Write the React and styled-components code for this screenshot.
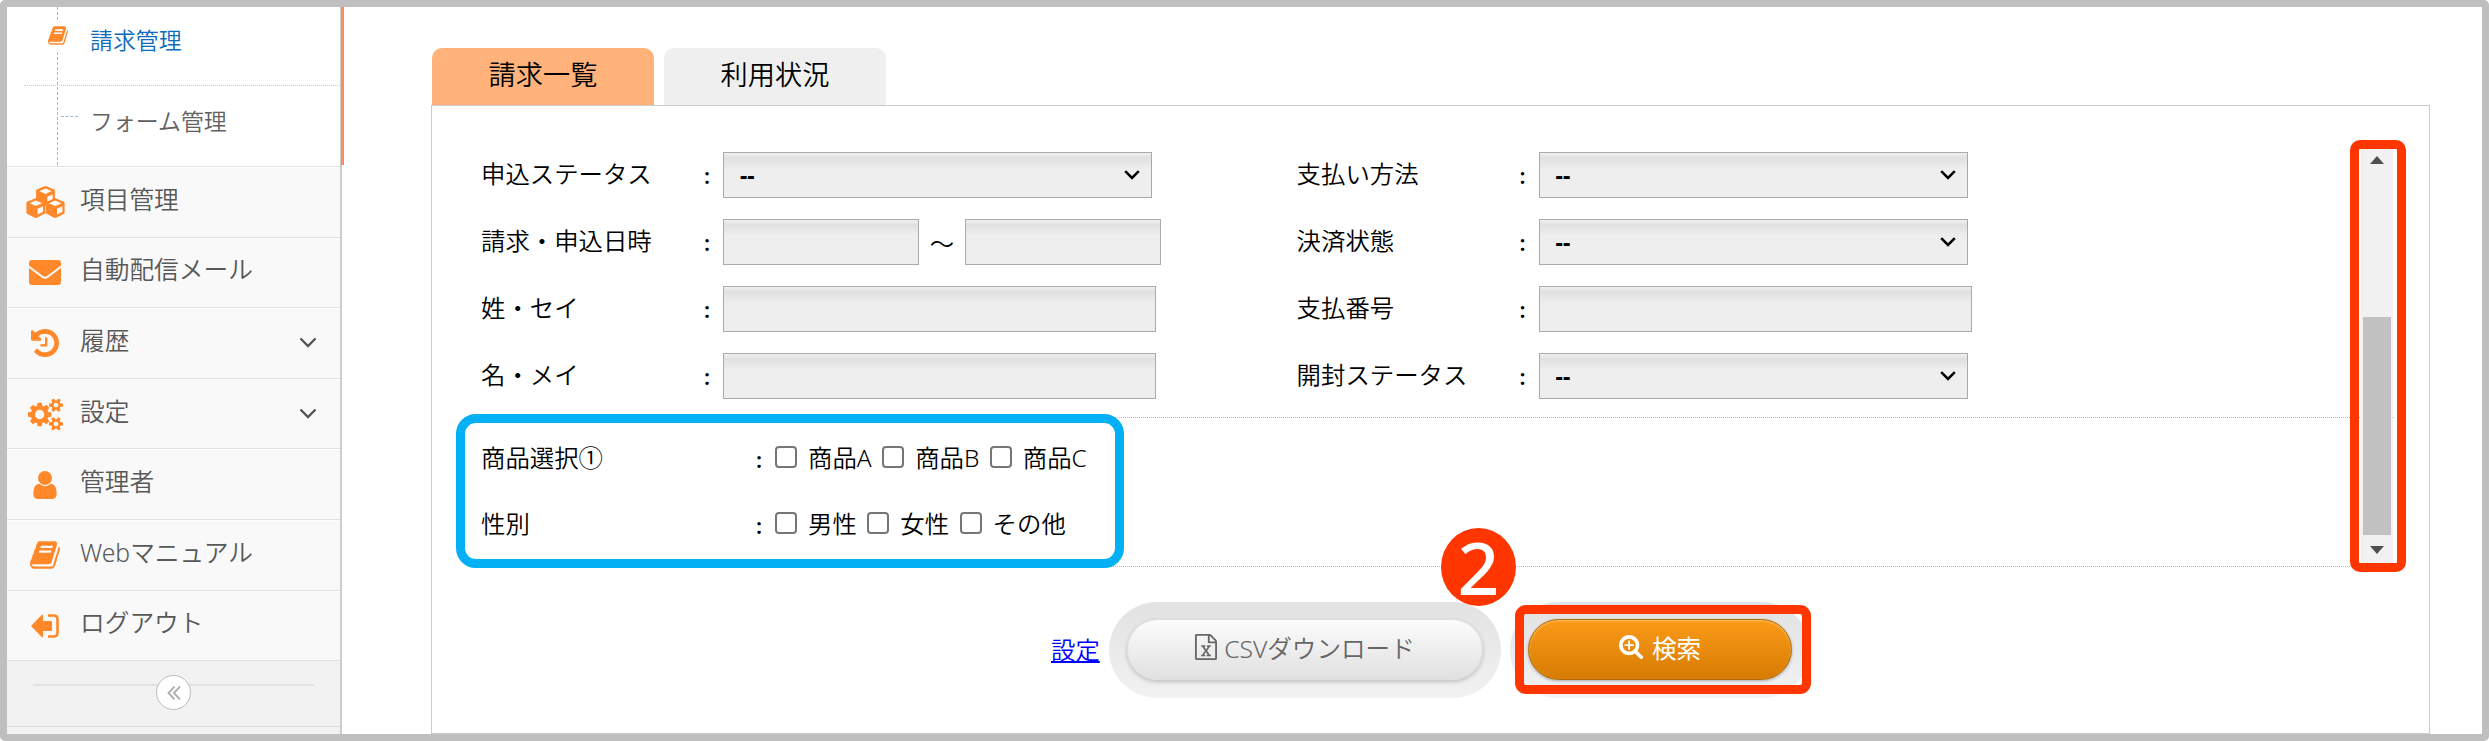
import styled, { createGlobalStyle } from "styled-components";

const menus = [
  { label: "項目管理", icon: "cubes" },
  { label: "自動配信メール", icon: "mail" },
  { label: "履歴", icon: "history", open: true },
  { label: "設定", icon: "cogs", open: true },
  { label: "管理者", icon: "user" },
  { label: "Webマニュアル", icon: "book" },
  { label: "ログアウト", icon: "logout" },
];

const BOOK =
  "M1703 478q40 57 18 129l-275 906q-19 64-76.5 107.5t-122.5 43.5h-923q-77 0-148.5-53.5t-99.5-131.5q-24-67-2-127 0-4 3-27t4-37q1-8-3-21.5t-3-19.5q2-11 8-21t16.5-23.5 16.5-23.5q23-38 45-91.5t30-91.5q3-10 .5-30t-.5-28q3-11 17-28t17-23q21-36 42-92t25-90q1-9-2.5-32t.5-28q4-13 22-30.5t22-22.5q19-26 42.5-84.5t27.5-96.5q1-8-3-25.5t-2-26.5q2-8 9-18t18-23 17-21q8-12 16.5-30.5t15-35 16-36 19.5-32 26.5-23.5 36-11.5 47.5 5.5l-1 3q38-9 51-9h761q74 0 114 56t18 130l-274 906q-36 119-71.5 153.5t-128.5 34.5h-869q-27 0-38 15-11 16-1 43 24 70 144 70h923q29 0 56-15.5t35-41.5l300-987q7-22 5-57 38 15 59 43zm-1064 2q-4 13 2 22.5t20 9.5h608q13 0 25.5-9.5t16.5-22.5l21-64q4-13-2-22.5t-20-9.5h-608q-13 0-25.5 9.5t-16.5 22.5zm-83 256q-4 13 2 22.5t20 9.5h608q13 0 25.5-9.5t16.5-22.5l21-64q4-13-2-22.5t-20-9.5h-608q-13 0-25.5 9.5t-16.5 22.5z";
const USER =
  "M1536 1399q0 109-62.5 187t-150.5 78h-854q-88 0-150.5-78t-62.5-187q0-85 8.5-160.5t31.5-152 58.5-131 94-89 134.5-34.5q131 128 313 128t313-128q76 0 134.5 34.5t94 89 58.5 131 31.5 152 8.5 160.5zm-256-887q0 159-112.5 271.5t-271.5 112.5-271.5-112.5-112.5-271.5 112.5-271.5 271.5-112.5 271.5 112.5 112.5 271.5z";
const HISTORY =
  "M1664 896q0 156-61 298t-164 245-245 164-298 61q-172 0-327-72.5t-264-204.5q-7-10-6.5-22.5t8.5-20.5l137-138q10-9 25-9 16 2 23 12 73 95 179 147t225 52q104 0 198.5-40.5t163.5-109.5 109.5-163.5 40.5-198.5-40.5-198.5-109.5-163.5-163.5-109.5-198.5-40.5q-98 0-188 35.5t-160 101.5l137 138q31 30 14 69-17 40-59 40h-448q-26 0-45-19t-19-45v-448q0-42 40-59 39-17 69 14l130 129q107-101 244.5-156.5t284.5-55.5q156 0 298 61t245 164 164 245 61 298zm-640-288v448q0 14-9 23t-23 9h-320q-14 0-23-9t-9-23v-64q0-14 9-23t23-9h224v-352q0-14 9-23t23-9h64q14 0 23 9t9 23z";
const COGS =
  "M896 896q0-106-75-181t-181-75-181 75-75 181 75 181 181 75 181-75 75-181zm768 512q0-52-38-90t-90-38-90 38-38 90q0 53 37.5 90.5t90.5 37.5 90.5-37.5 37.5-90.5zm0-1024q0-52-38-90t-90-38-90 38-38 90q0 53 37.5 90.5t90.5 37.5 90.5-37.5 37.5-90.5zm-384 421v185q0 10-7 19.5t-16 10.5l-155 24q-11 35-32 76 34 48 90 115 7 11 7 20 0 12-7 19-23 30-82.5 89.5t-78.5 59.5q-11 0-21-7l-115-90q-37 19-77 31-11 108-23 155-7 24-30 24h-186q-11 0-20-7.5t-10-17.5l-23-153q-34-10-75-31l-118 89q-7 7-20 7-11 0-21-8-144-133-144-160 0-9 7-19 10-14 41-53t47-61q-23-44-35-82l-152-24q-10-1-17-9.5t-7-19.5v-185q0-10 7-19.5t16-10.5l155-24q11-35 32-76-34-48-90-115-7-11-7-20 0-12 7-20 22-30 82-89t79-59q11 0 21 7l115 90q34-18 77-32 11-108 23-154 7-24 30-24h186q11 0 20 7.5t10 17.5l23 153q34 10 75 31l118-89q8-7 20-7 11 0 21 8 144 133 144 160 0 8-7 19-12 16-42 54t-45 60q23 48 34 82l152 23q10 2 17 10.5t7 19.5zm640 533v140q0 16-149 31-12 27-30 52 51 113 51 138 0 4-4 7-122 71-124 71-8 0-46-47t-52-68q-20 2-30 2t-30-2q-14 21-52 68t-46 47q-2 0-124-71-4-3-4-7 0-25 51-138-18-25-30-52-149-15-149-31v-140q0-16 149-31 13-29 30-52-51-113-51-138 0-4 4-7 4-2 35-20t59-34 30-16q8 0 46 46.5t52 67.5q20-2 30-2t30 2q51-71 92-112l6-2q4 0 124 70 4 3 4 7 0 25-51 138 17 23 30 52 149 15 149 31zm0-1024v140q0 16-149 31-12 27-30 52 51 113 51 138 0 4-4 7-122 71-124 71-8 0-46-47t-52-68q-20 2-30 2t-30-2q-14 21-52 68t-46 47q-2 0-124-71-4-3-4-7 0-25 51-138-18-25-30-52-149-15-149-31v-140q0-16 149-31 13-29 30-52-51-113-51-138 0-4 4-7 4-2 35-20t59-34 30-16q8 0 46 46.5t52 67.5q20-2 30-2t30 2q51-71 92-112l6-2q4 0 124 70 4 3 4 7 0 25-51 138 17 23 30 52 149 15 149 31z";
const EXCEL =
  "M1596 380q28 28 48 76t20 88v1152q0 40-28 68t-68 28h-1344q-40 0-68-28t-28-68v-1600q0-40 28-68t68-28h896q40 0 88 20t76 48zm-444-244v376h376q-10-29-22-41l-313-313q-12-12-41-22zm384 1528v-1024h-416q-40 0-68-28t-28-68v-416h-768v1536h1280zm-979-234v106h281v-106h-75l103-161q5-7 10-16.5t7.5-13.5 3.5-4h2q1 4 5 10 2 4 4.5 7.5t6 8 6.5 8.500l107 161h-76v106h291v-106h-68l-192-273 195-282h67v-107h-279v107h74l-103 159q-4 7-10 16.500t-9 13.500l-2 3h-2q-1-4-5-10-6-11-17-23l-106-159h76v-107h-290v107h68l189 272-194 283h-68z";
const SEARCH_PLUS =
  "M1088 800v64q0 13-9.500 22.500t-22.500 9.500h-224v224q0 13-9.500 22.500t-22.500 9.500h-64q-13 0-22.500-9.500t-9.500-22.500v-224h-224q-13 0-22.500-9.500t-9.500-22.500v-64q0-13 9.500-22.500t22.500-9.500h224v-224q0-13 9.500-22.500t22.500-9.500h64q13 0 22.500 9.500t9.500 22.500v224h224q13 0 22.500 9.500t9.500 22.500zm128 32q0-185-131.500-316.500t-316.500-131.500-316.500 131.500-131.500 316.500 131.500 316.500 316.500 131.500 316.500-131.500 131.500-316.500zm512 832q0 53-37.500 90.500t-90.500 37.500q-54 0-90-38l-343-342q-179 124-399 124-143 0-273.500-55.500t-225-150-150-225-55.500-273.500 55.500-273.500 150-225 225-150 273.500-55.500 273.500 55.500 225 150 150 225 55.500 273.500q0 220-124 399l343 343q37 37 37 90z";

function Cube({ x, y }) {
  return (
    <g transform={`translate(${x} ${y})`}>
      <path
        d="M0-8.800L8.300-5.300V4.800L0 9-8.300 4.800V-5.300z"
        stroke="currentColor"
        strokeWidth="2.200"
        strokeLinejoin="round"
      />
      <path d="M0-7.500L6.300-4.800 0-2-6.300-4.800zM1.800.8L7.200-1.700V3.800L1.800 6.600z" fill="#f9f9f9" />
    </g>
  );
}

function MenuIcon({ name }) {
  switch (name) {
    case "cubes":
      return (
        <svg width="39" height="32" viewBox="0 0 39 32">
          <Cube x={19.5} y={9.9} />
          <Cube x={9.8} y={22} />
          <Cube x={29.2} y={22} />
        </svg>
      );
    case "mail":
      return (
        <svg width="32" height="25" viewBox="0 0 32 25">
          <path d="M3 0h26q3 0 3 3v2.500L18 16q-2 1.500-4 0L0 5.500V3q0-3 3-3zM0 8l13 9.800q3 2 6 0L32 8V22q0 3-3 3H3q-3 0-3-3z" />
        </svg>
      );
    case "history":
      return (
        <svg width="28" height="28" viewBox="128 128 1536 1536">
          <path d={HISTORY} />
        </svg>
      );
    case "cogs":
      return (
        <svg width="35" height="31" viewBox="0 50 1920 1690">
          <path d={COGS} />
        </svg>
      );
    case "user":
      return (
        <svg width="26" height="28" viewBox="256 128 1280 1536">
          <path d={USER} />
        </svg>
      );
    case "book":
      return (
        <svg width="30" height="28" viewBox="64 128 1664 1536">
          <path d={BOOK} />
        </svg>
      );
    default:
      return (
        <svg width="28" height="24" viewBox="0 0 28 24">
          <path d="M0 12L11 .8q1-.8 1 .5V7h8q1 0 1 1v8q0 1-1 1h-8v5.700q0 1.300-1 .5z" />
          <path
            d="M17 1.500h5.500q4 0 4 4v13q0 4-4 4H17"
            fill="none"
            stroke="currentColor"
            strokeWidth="2.600"
          />
        </svg>
      );
  }
}

function Chevron() {
  return (
    <svg width="16" height="10" viewBox="0 0 16 10" fill="none">
      <path d="M1.200 1.200L8 8l6.800-6.800" stroke="#000" strokeWidth="2.500" />
    </svg>
  );
}

function Field({ label, select, children }) {
  return (
    <FieldRow>
      <Label>{label}</Label>
      <Colon>:</Colon>
      {children ||
        (select ? (
          <Select>
            --
            <Chevron />
          </Select>
        ) : (
          <Input $width={433} />
        ))}
    </FieldRow>
  );
}

function Option({ children }) {
  return (
    <OptionLabel>
      <Check type="checkbox" />
      <OptionText>{children}</OptionText>
    </OptionLabel>
  );
}

function App() {
  return (
    <>
      <GlobalStyle />
      <Frame>
        <Sidebar>
          <SubMenu>
            <SubItem $active>
              <BookMark>
                <svg width="20" height="19" viewBox="64 128 1664 1536">
                  <path d={BOOK} />
                </svg>
              </BookMark>
              請求管理
            </SubItem>
            <SubItem>
              <Branch />
              フォーム管理
            </SubItem>
          </SubMenu>
          {menus.map(({ label, icon, open }) => (
            <MenuItem key={label}>
              <IconCell>
                <MenuIcon name={icon} />
              </IconCell>
              <MenuText>{label}</MenuText>
              {open && (
                <svg width="18" height="12" viewBox="0 0 18 12" fill="none">
                  <path d="M1.500 1.500L9 9l7.500-7.500" stroke="#555" strokeWidth="2.400" />
                </svg>
              )}
            </MenuItem>
          ))}
          <Collapse>
            <CollapseButton>
              <svg width="14" height="14" viewBox="0 0 14 14" fill="none" stroke="#aaa" strokeWidth="1.800">
                <path d="M7.500 .7L1.500 7l6 6.300M13 .7L7 7l6 6.300" />
              </svg>
            </CollapseButton>
          </Collapse>
        </Sidebar>

        <Main>
          <Tabs>
            <Tab $active>請求一覧</Tab>
            <Tab>利用状況</Tab>
          </Tabs>
          <Panel>
            <ScrollArea>
              <Conditions>
                <Fields>
                  <Field label="申込ステータス" select />
                  <Field label="請求・申込日時">
                    <Input $width={196} />
                    <Tilde>～</Tilde>
                    <Input $width={196} />
                  </Field>
                  <Field label="姓・セイ" />
                  <Field label="名・メイ" />
                </Fields>
                <Fields>
                  <Field label="支払い方法" select />
                  <Field label="決済状態" select />
                  <Field label="支払番号" />
                  <Field label="開封ステータス" select />
                </Fields>
              </Conditions>
              <Extra>
                <ExtraRow>
                  <ExtraLabel>商品選択①</ExtraLabel>
                  <Colon>:</Colon>
                  <Option>商品A</Option>
                  <Option>商品B</Option>
                  <Option>商品C</Option>
                </ExtraRow>
                <ExtraRow>
                  <ExtraLabel>性別</ExtraLabel>
                  <Colon>:</Colon>
                  <Option>男性</Option>
                  <Option>女性</Option>
                  <Option>その他</Option>
                </ExtraRow>
                <BlueMark />
              </Extra>
              <Scrollbar>
                <Arrow $up />
                <Thumb />
                <Arrow />
                <ScrollMark />
              </Scrollbar>
            </ScrollArea>
            <Actions>
              <SettingLink href="#">設定</SettingLink>
              <Pill>
                <CsvButton>
                  <svg width="22" height="26" viewBox="128 0 1536 1792" preserveAspectRatio="none">
                    <path d={EXCEL} />
                  </svg>
                  CSVダウンロード
                </CsvButton>
              </Pill>
              <Pill>
                <SearchButton>
                  <svg width="24" height="24" viewBox="64 128 1664 1664">
                    <path d={SEARCH_PLUS} />
                  </svg>
                  検索
                </SearchButton>
                <SearchMark />
                <StepNumber>2</StepNumber>
              </Pill>
            </Actions>
          </Panel>
        </Main>
      </Frame>
    </>
  );
}

const GlobalStyle = createGlobalStyle`
  * {
    box-sizing: border-box;
  }
  body {
    margin: 0;
    background: #fff;
    font-family: "Noto Sans", "Noto Sans CJK JP", sans-serif;
    font-weight: 350;
    font-size: 24.4px;
    color: #000;
  }
  svg {
    display: block;
    flex: none;
    fill: currentColor;
  }
  svg[fill="none"] {
    fill: none;
  }
`;

const Frame = styled.div`
  display: flex;
  width: 2489px;
  height: 741px;
  border: 7px solid #bfbfbf;
  border-radius: 5px;
  overflow: hidden;
`;
const Sidebar = styled.nav`
  flex: none;
  width: 335px;
  border-right: 2px solid #ccc;
  background: #f2f2f2;
  color: #585858;
`;
const SubMenu = styled.div`
  position: relative;
  height: 160px;
  background: #fff;
  border-bottom: 1px solid #e2e2e2;
  &::before {
    content: "";
    position: absolute;
    left: 50px;
    top: 0;
    height: 158px;
    border-left: 1px dashed #9dbdd6;
  }
  &::after {
    content: "";
    position: absolute;
    left: 334px;
    top: 0;
    width: 3px;
    height: 158px;
    background: #ff8c5a;
  }
`;
const SubItem = styled.div`
  position: relative;
  height: ${({ $active }) => ($active ? 79 : 80)}px;
  margin-left: 17px;
  padding-left: 66px;
  line-height: ${({ $active }) => ($active ? 67 : 71)}px;
  font-size: 22.9px;
  color: ${({ $active }) => ($active ? "#0b6cbc" : "#616161")};
  border-bottom: ${({ $active }) => ($active ? "1px dotted #ccc" : "0")};
`;
const BookMark = styled.span`
  position: absolute;
  left: 20px;
  top: 13px;
  padding: 6px 4px;
  background: #fff;
  color: #ff892a;
`;
const Branch = styled.i`
  position: absolute;
  left: 37px;
  top: 30px;
  width: 17px;
  border-top: 1px dashed #9dbdd6;
`;
const MenuItem = styled.div`
  display: flex;
  align-items: center;
  height: 70.6px;
  padding-right: 16px;
  background: #f9f9f9;
  border-top: 1px solid #fff;
  border-bottom: 1px solid #e0e0e0;
  & > svg {
    margin-right: 7px;
  }
`;
const IconCell = styled.span`
  display: flex;
  justify-content: center;
  width: 76px;
  color: #ff892a;
`;
const MenuText = styled.span`
  flex: 1;
  margin-left: -3px;
  padding-bottom: 9px;
  font-size: 24.7px;
`;
const Collapse = styled.div`
  display: flex;
  justify-content: center;
  height: 66px;
  padding-top: 14px;
  border-bottom: 1px solid #ddd;
  background: linear-gradient(#e2e2e2, #e2e2e2) 26px 23px / 281px 2px no-repeat;
`;
const CollapseButton = styled.span`
  display: flex;
  align-items: center;
  justify-content: center;
  width: 35px;
  height: 35px;
  border: 1px solid #bbb;
  border-radius: 50%;
  background: #fff;
`;

const Main = styled.main`
  flex: 1;
  padding: 41px 52px 0 89px;
`;
const Tabs = styled.div`
  display: flex;
  gap: 10px;
  padding-left: 1px;
`;
const Tab = styled.div`
  width: 222px;
  height: 57px;
  border-radius: 10px 10px 0 0;
  background: ${({ $active }) => ($active ? "#ffb27a" : "#efefef")};
  font-size: 27.2px;
  line-height: 53px;
  text-align: center;
`;
const Panel = styled.section`
  height: 629px;
  border: 1px solid #ccc;
`;
const ScrollArea = styled.div`
  position: relative;
  height: 461px;
  margin-left: 49px;
  width: 1913px;
`;
const Conditions = styled.div`
  display: flex;
  height: 312px;
  padding-top: 46px;
  border-bottom: 1px dotted #bbb;
`;
const Fields = styled.div`
  display: grid;
  grid-template-rows: repeat(4, 46px);
  row-gap: 21px;
  align-content: start;
  width: 815.6px;
`;
const FieldRow = styled.div`
  display: flex;
  align-items: center;
`;
const Label = styled.span`
  width: 223px;
  padding-bottom: 6px;
  white-space: nowrap;
`;
const Colon = styled.span`
  width: 19px;
  padding-bottom: 1px;
  font-weight: 600;
  font-size: 22px;
`;
const Input = styled.input`
  width: ${({ $width }) => $width}px;
  height: 46px;
  margin: 0;
  border: 1px solid #aaa;
  background: linear-gradient(#f0f0f0 0, #e0e0e0 5px, #eee 16px);
`;
const Select = styled.div`
  display: flex;
  align-items: center;
  justify-content: space-between;
  width: 429px;
  height: 46px;
  padding: 0 11px 0 16px;
  border: 1px solid #aaa;
  background: linear-gradient(#f0f0f0 0, #e0e0e0 5px, #eee 16px);
  font-weight: 700;
  font-size: 23px;
`;
const Tilde = styled.span`
  width: 46px;
  text-align: center;
`;
const Extra = styled.div`
  position: relative;
  display: grid;
  grid-template-rows: 66px 66px;
  height: 149px;
  padding-top: 8px;
  border-bottom: 1px dotted #bbb;
`;
const ExtraRow = styled.div`
  display: flex;
  align-items: center;
`;
const ExtraLabel = styled.span`
  width: 275px;
  padding-bottom: 5px;
`;
const OptionLabel = styled.label`
  display: flex;
  align-items: center;
  margin-right: 10.5px;
`;
const OptionText = styled.span`
  padding-bottom: 5px;
`;
const Check = styled.input`
  appearance: none;
  width: 22px;
  height: 22px;
  margin: 0 11px 5px 0;
  border: 2px solid #767676;
  border-radius: 4px;
  background: #fff;
`;
const BlueMark = styled.div`
  position: absolute;
  left: -25px;
  top: -4px;
  width: 668px;
  height: 154px;
  border: 9px solid #02b0f3;
  border-radius: 20px;
`;
const Scrollbar = styled.div`
  position: absolute;
  left: 1880px;
  top: 38px;
  display: flex;
  flex-direction: column;
  align-items: center;
  justify-content: space-between;
  width: 32px;
  height: 422px;
  padding: 12px 0;
  background: #f1f1f1;
`;
const Arrow = styled.i`
  border: 7.5px solid transparent;
  border-top: ${({ $up }) => ($up ? 0 : "8px solid #505050")};
  border-bottom: ${({ $up }) => ($up ? "8px solid #505050" : 0)};
`;
const Thumb = styled.div`
  width: 28px;
  height: 218px;
  margin-top: 141px;
  background: #c1c1c1;
`;
const ScrollMark = styled.div`
  position: absolute;
  left: -11px;
  top: -4px;
  width: 56px;
  height: 432px;
  border: 9px solid #ff3600;
  border-radius: 10px;
`;

const Actions = styled.div`
  display: flex;
  align-items: center;
  height: 96px;
  margin-top: 35px;
  padding-left: 619px;
`;
const SettingLink = styled.a`
  width: 58px;
  padding-bottom: 4px;
  color: #00f;
`;
const Pill = styled.div`
  position: relative;
  height: 96px;
  margin-right: 9px;
  padding: 17px 18px;
  border-radius: 48px;
  background: linear-gradient(#e2e2e2, #f2f2f2);
`;
const CsvButton = styled.button`
  display: flex;
  align-items: center;
  justify-content: center;
  gap: 7px;
  width: 356px;
  height: 61px;
  padding: 0 0 6px;
  border: 1px solid #ddd;
  border-radius: 31px;
  background: linear-gradient(#fcfcfc, #e0e0e0);
  box-shadow: 0 2px 4px rgba(0, 0, 0, 0.2);
  font: inherit;
  font-size: 24.6px;
  color: #666;
`;
const SearchButton = styled(CsvButton)`
  gap: 9px;
  width: 264px;
  border: 1px solid #b06a08;
  background: linear-gradient(#fb9a17, #d67c04);
  box-shadow:
    inset 0 1px 2px #ffc36e,
    0 1px 3px rgba(0, 0, 0, 0.3);
  font-weight: 400;
  color: #fff;
`;
const SearchMark = styled.div`
  position: absolute;
  left: 5px;
  top: 3px;
  width: 296px;
  height: 89px;
  border: 9px solid #ff3600;
  border-radius: 11px;
`;
const StepNumber = styled.div`
  position: absolute;
  left: -69px;
  top: -74px;
  width: 75px;
  height: 78px;
  border-radius: 50%;
  background: #ff3600;
  color: #fff;
  font-size: 73px;
  font-weight: 500;
  line-height: 78px;
  text-align: center;
`;

export default App;
